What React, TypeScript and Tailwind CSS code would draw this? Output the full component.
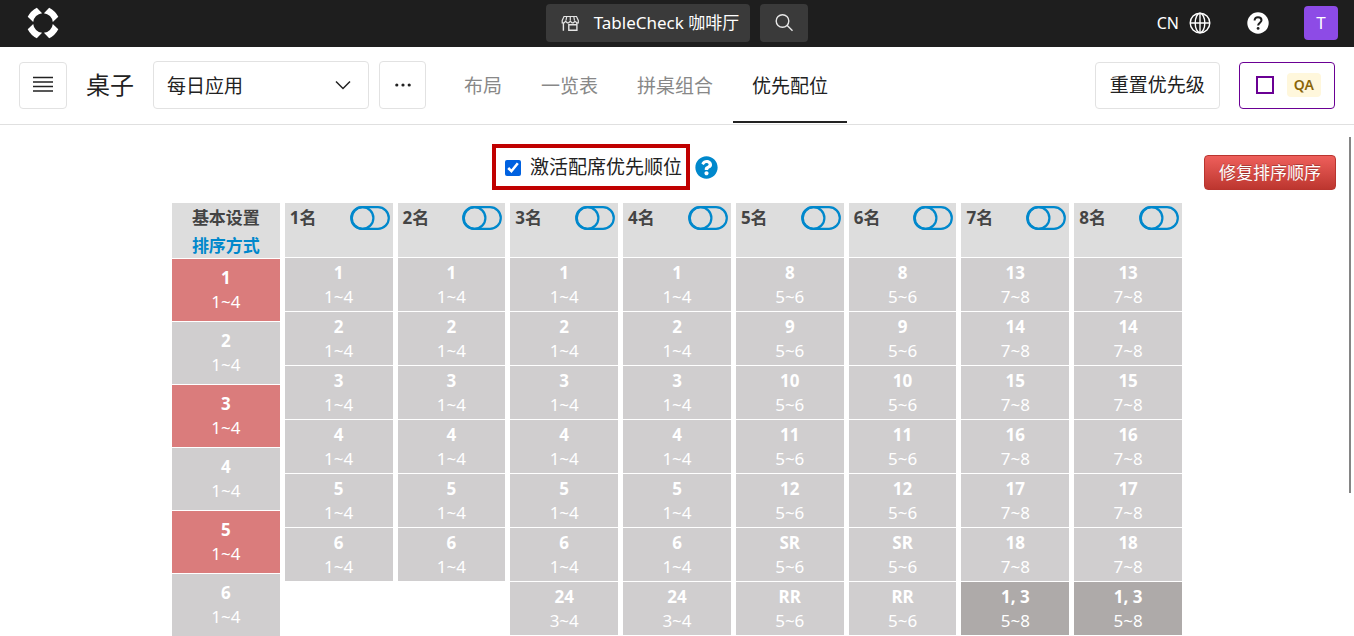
import React from "react";
import { FaQuestionCircle } from "react-icons/fa";

type Cell = { name: string; seats: string; tone?: "red" | "dark" };

const cells = (names: string[], seats: string): Cell[] => names.map((name) => ({ name, seats }));

const base: Cell[] = ["1", "2", "3", "4", "5", "6"].map((name) => ({
  name,
  seats: "1~4",
  tone: Number(name) % 2 === 1 ? "red" : undefined,
}));

const small = cells(["1", "2", "3", "4", "5", "6"], "1~4");
const medium: Cell[] = [...small, { name: "24", seats: "3~4" }];
const large: Cell[] = cells(["8", "9", "10", "11", "12", "SR", "RR"], "5~6");
const party: Cell[] = [
  ...cells(["13", "14", "15", "16", "17", "18"], "7~8"),
  { name: "1, 3", seats: "5~8", tone: "dark" },
];

const columns = [small, small, medium, medium, large, large, party, party];

const toneClass = { red: "bg-[#da7c7c]", dark: "bg-[#aeaaa9]", plain: "bg-[#d0cecf]" };

function CellBox({ cell, roomy }: { cell: Cell; roomy?: boolean }) {
  return (
    <li
      className={`flex flex-col items-center border-b border-white leading-6 text-white ${
        roomy ? "pt-[7px] pb-[7px]" : "pt-[3px] pb-[2px]"
      } ${toneClass[cell.tone ?? "plain"]}`}
    >
      <strong className="font-bold">{cell.name}</strong>
      <span>{cell.seats}</span>
    </li>
  );
}

function Toggle({ label }: { label: string }) {
  return (
    <button type="button" role="switch" aria-checked="false" aria-label={label}>
      <svg className="h-6 w-10" viewBox="0 0 40 24" fill="none" stroke="#0088cc" strokeWidth="2.2">
        <rect x="1.2" y="1.2" width="37.6" height="21.6" rx="10.8" />
        <circle cx="12.6" cy="12" r="10.8" />
      </svg>
    </button>
  );
}

function Logo() {
  return (
    <svg className="size-8" viewBox="0 0 32 32" fill="#fff">
      {[0, 90, 180, 270].map((angle) => (
        <path
          key={angle}
          transform={`rotate(${angle} 16 16)`}
          d="M16.9 6.2 L22.2 0.7 Q28.2 3.8 31.3 9.8 L25.8 15.1 A9.9 9.9 0 0 0 16.9 6.2Z"
        />
      ))}
    </svg>
  );
}

const tabs = ["布局", "一览表", "拼桌组合", "优先配位"];

export default function App() {
  return (
    <div className="h-screen overflow-hidden bg-white font-['Noto_Sans','Noto_Sans_CJK_SC',sans-serif] text-[17px] text-[#222]">
      <header className="grid h-[47px] grid-cols-[1fr_auto_1fr] items-center bg-[#1e1e1e] px-4 pb-[2px] text-white">
        <a href="#" aria-label="TableCheck" className="ml-[11px]">
          <Logo />
        </a>
        <div className="flex gap-[10px]">
          <button type="button" className="flex h-[38px] items-center gap-[14px] rounded bg-[#3a3a3a] pr-[11px] pl-[14px]">
            <svg className="size-5" viewBox="0 0 20 20" fill="none" stroke="#e4e4e4" strokeWidth="1.4">
              <path d="M4 3.500h12.500l1.800 4v2.300h-1.500L15 8.300l-1.600 1.500h-1.300L10.300 8.300 8.600 9.800H7.300L5.500 8.300 4 9.800H2.200V7.500zM6.700 3.500 6 7.500M13.800 3.500l.7 4M10.300 3.500v4" strokeWidth="1.200" />
              <path d="M3.400 10v7.700M8.800 11.700h8.100v5.600H8.800zM16.900 10v2" />
            </svg>
            <span className="whitespace-nowrap">TableCheck 咖啡厅</span>
          </button>
          <button type="button" aria-label="搜索" className="flex h-[38px] w-12 items-center justify-center rounded bg-[#3a3a3a]">
            <svg className="size-5" viewBox="0 0 20 20" fill="none" stroke="#e8e8e8" strokeWidth="1.400">
              <circle cx="8.500" cy="8" r="6.300" />
              <path d="M13 12.300 18.500 17.800" />
            </svg>
          </button>
        </div>
        <div className="flex items-center justify-end">
          <button type="button" className="flex items-center gap-[10px] text-base">
            CN
            <svg className="size-[22px]" viewBox="0 0 22 22" fill="none" stroke="#fff" strokeWidth="1.400">
              <circle cx="11" cy="11" r="9.800" />
              <ellipse cx="11" cy="11" rx="4.800" ry="9.800" />
              <path d="M1.200 11h19.600M11 1.200v19.600" />
            </svg>
          </button>
          <button type="button" aria-label="帮助" className="ml-9">
            <svg className="size-[22px]" viewBox="0 0 22 22">
              <circle cx="11" cy="11" r="10.700" fill="#fff" />
              <path d="M7.600 8.600C7.600 6.400 9 5.200 11 5.200s3.500 1.200 3.500 3c0 2.400-3.400 2.600-3.400 5.400" fill="none" stroke="#1e1e1e" strokeWidth="2" />
              <circle cx="11.100" cy="16.400" r="1.400" fill="#1e1e1e" />
            </svg>
          </button>
          <button type="button" className="ml-[35px] size-[34px] rounded bg-[#8d4be6]">T</button>
        </div>
      </header>

      <div className="flex h-[78px] items-center border-b border-[#e0e0e0] px-[19px] pb-px text-[19px]">
        <button type="button" aria-label="菜单" className="flex h-[47px] w-12 items-center justify-center rounded border border-[#e2e2e2]">
          <svg className="size-5" viewBox="0 0 20 20" stroke="#222" strokeWidth="1.500">
            <path d="M0 2.500h20M0 7h20M0 11.500h20M0 16h20" />
          </svg>
        </button>
        <h1 className="ml-[19px] text-2xl whitespace-nowrap">桌子</h1>
        <div className="relative ml-[19px] w-[216px]">
          <select aria-label="应用范围" className="h-12 w-full appearance-none rounded border border-[#e2e2e2] bg-white pt-[2px] pl-[13px]">
            <option>每日应用</option>
          </select>
          <svg className="pointer-events-none absolute top-4 right-[18px] size-4" viewBox="0 0 16 16" fill="none" stroke="#222" strokeWidth="1.500">
            <path d="M1 4.500 8 11.500 15 4.500" />
          </svg>
        </div>
        <button type="button" aria-label="更多" className="ml-[10px] flex h-12 w-[47px] items-center justify-center rounded border border-[#e2e2e2]">
          <svg className="size-4" viewBox="0 0 16 16" fill="#222">
            <circle cx="1.800" cy="8" r="1.600" />
            <circle cx="8" cy="8" r="1.600" />
            <circle cx="14.200" cy="8" r="1.600" />
          </svg>
        </button>
        <nav className="ml-[19px] flex h-full items-stretch gap-px">
          {tabs.map((tab, i) => (
            <a
              key={tab}
              href="#"
              aria-current={i === 3 ? "page" : undefined}
              className={`flex items-center border-b-2 px-[19px] pt-1 whitespace-nowrap ${
                i === 3 ? "border-[#222] text-[#222]" : "border-transparent text-[#888]"
              }`}
            >
              {tab}
            </a>
          ))}
        </nav>
        <button type="button" className="ml-auto h-[47px] rounded border border-[#e2e2e2] px-[14px] pt-px whitespace-nowrap">
          重置优先级
        </button>
        <label className="ml-[19px] flex h-[47px] items-center gap-[13px] rounded border border-[#6a0094] pr-[13px] pl-4">
          <input type="checkbox" className="size-[18px] appearance-none border-2 border-[#6a0094]" />
          <span className="rounded bg-[#fff7dc] px-[7px] text-sm leading-6 font-semibold text-[#8a6508]">QA</span>
        </label>
      </div>

      <main className="relative">
        <div className="flex items-start px-[18px] pt-[19px]">
          <div className="flex flex-1 items-center justify-center gap-[5px] pr-3">
            <label className="flex h-[46px] items-center gap-[9px] border-4 border-[#c00000] pt-px pr-1 pl-[9px] text-[19px] whitespace-nowrap">
              <input type="checkbox" defaultChecked className="size-4 accent-[#0061e0]" />
              激活配席优先顺位
            </label>
            <button type="button" aria-label="说明">
              <FaQuestionCircle className="size-[23px] text-[#0088cc]" />
            </button>
          </div>
          <button
            type="button"
            className="mt-[11px] h-[35px] rounded border border-[#b9352f] bg-linear-to-b from-[#ee5f5b] to-[#bd362f] px-[14px] whitespace-nowrap text-white text-shadow-[0_-1px_0_rgba(0,0,0,0.25)]"
          >
            修复排序顺序
          </button>
        </div>

        <div className="mx-auto mt-[13px] grid max-w-[1010px] grid-cols-9 items-start gap-[5px]">
          <section>
            <div className="flex h-14 flex-col items-center border-b border-white bg-[#ddd] pt-px leading-7 font-bold">
              <h2 className="text-[#444]">基本设置</h2>
              <a href="#" className="text-[#0088cc]">排序方式</a>
            </div>
            <ol>
              {base.map((cell) => (
                <CellBox key={cell.name} cell={cell} roomy />
              ))}
            </ol>
          </section>
          {columns.map((column, i) => (
            <section key={i}>
              <div className="flex h-[55px] items-start justify-between border-b border-white bg-[#ddd] pt-[3px] pr-[3px] pl-[5px] leading-6">
                <h2 className="font-bold text-[#444]">{i + 1}名</h2>
                <Toggle label={`${i + 1}名`} />
              </div>
              <ol>
                {column.map((cell) => (
                  <CellBox key={cell.name} cell={cell} />
                ))}
              </ol>
            </section>
          ))}
        </div>
        <div className="absolute top-3 right-[3px] h-[356px] w-[2px] bg-[#858585]" />
      </main>
    </div>
  );
}
